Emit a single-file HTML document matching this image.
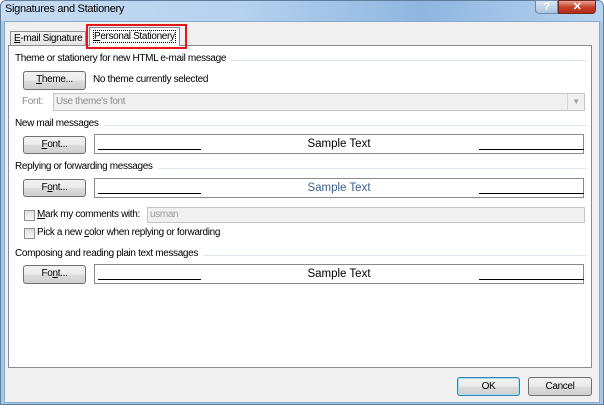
<!DOCTYPE html>
<html><head><style>
*{margin:0;padding:0;box-sizing:border-box}
body{width:604px;height:409px;overflow:hidden;background:#fff;font-family:"Liberation Sans",sans-serif;font-size:10px;letter-spacing:-0.35px;color:#000;position:relative;white-space:nowrap}
.a{position:absolute}
.btn{position:absolute;border:1px solid #707070;border-radius:3px;background:linear-gradient(#f2f2f2 0%,#ebebeb 50%,#dddddd 51%,#cfcfcf 100%);text-align:center;font-size:10px;line-height:16px}
.grp{position:absolute;left:15px;font-size:10px;background:#fff;padding-right:5px;z-index:2}
.sep{position:absolute;left:15px;width:572px;height:1px;background:#dde6ee}
.box{position:absolute;left:94px;width:490px;height:20px;border:1px solid #8a8a8a;background:#fff;text-align:center;font-size:11.5px;letter-spacing:0;line-height:18px}
.ln{position:absolute;top:14px;height:1px;background:#000}
.cb{position:absolute;width:11px;height:11px;border:1px solid #8e8f8f;background:linear-gradient(#e0e0e0,#f8f8f8)}
</style></head><body>
<div class="a" style="left:0;top:0;width:604px;height:405px;background:#a9c8e8;border:1px solid #5f7d9c;border-radius:6px 6px 0 0"></div>
<div class="a" style="left:1px;top:1px;width:602px;height:20px;background:linear-gradient(90deg,#c7dcf2,#b5d1ee 40%,#8fb6e0 70%,#b8d3ef);border-radius:5px 5px 0 0"></div>
<div class="a" style="left:5px;top:3px;font-size:11px;letter-spacing:-0.3px;color:#000">Signatures and Stationery</div>
<div class="a" style="left:535px;top:0;width:23px;height:14px;background:linear-gradient(#d8e6f4,#a8c4e0);border:1px solid #6d8bab;border-radius:0 0 0 4px;color:#fff;font-size:11px;font-weight:bold;text-align:center;line-height:12px">?</div>
<div class="a" style="left:558px;top:0;width:38px;height:14px;background:linear-gradient(#e8a393,#c7412b 50%,#b32a15);border:1px solid #6e2a20;border-radius:0 0 4px 0;color:#fff;font-size:11px;font-weight:bold;text-align:center;line-height:12px">✕</div>
<div class="a" style="left:4px;top:21px;width:596px;height:382px;background:#f0f0f0;border:1px solid #8ba9c8"></div>
<!-- tabs -->
<div class="a" style="left:10px;top:31px;width:76px;height:15px;border:1px solid #8e8f8f;border-bottom:none;background:linear-gradient(#f3f3f3,#e3e3e3);line-height:13px;padding-left:3px"><u>E</u>-mail Signature</div>
<div class="a" style="left:8px;top:45px;width:584px;height:323px;background:#fff;border:1px solid #898c95"></div>
<div class="a" style="left:89px;top:27px;width:91px;height:19px;border:1px solid #898c95;border-bottom:none;background:#fff;line-height:18px;padding-left:4px;z-index:3"><span style="outline:1px dotted #000"><u>P</u>ersonal Stationery</span></div>
<div class="a" style="left:86px;top:24px;width:101px;height:25px;border:2px solid #e3161b;z-index:4"></div>
<!-- section 1 -->
<div class="sep" style="top:60px"></div>
<div class="grp" style="top:53px">Theme or stationery for new HTML e-mail message</div>
<div class="btn" style="left:23px;top:71px;width:63px;height:19px"><u>T</u>heme...</div>
<div class="a" style="left:93px;top:74px">No theme currently selected</div>
<div class="a" style="left:22px;top:96px;color:#8d8d8d">Font:</div>
<div class="a" style="left:53px;top:93px;width:532px;height:18px;border:1px solid #c5c5c5;background:#f0f0f0;color:#8d8d8d;padding-left:2px;line-height:16px">Use theme's font</div>
<div class="a" style="left:567px;top:94px;width:17px;height:16px;border-left:1px solid #d8d8d8;color:#a0a0a0;font-size:8px;text-align:center;line-height:16px">▼</div>
<!-- new mail -->
<div class="sep" style="top:125px"></div>
<div class="grp" style="top:118px">New mail messages</div>
<div class="btn" style="left:23px;top:136px;width:63px;height:18px"><u>F</u>ont...</div>
<div class="box" style="top:134px">Sample Text<div class="ln" style="left:3px;width:103px"></div><div class="ln" style="left:384px;width:105px"></div></div>
<!-- replying -->
<div class="sep" style="top:168px"></div>
<div class="grp" style="top:161px">Replying or forwarding messages</div>
<div class="btn" style="left:23px;top:179px;width:63px;height:18px">F<u>o</u>nt...</div>
<div class="box" style="top:178px;color:#3c5d8f">Sample Text<div class="ln" style="left:3px;width:103px"></div><div class="ln" style="left:384px;width:105px"></div></div>
<div class="cb" style="left:24px;top:210px"></div>
<div class="a" style="left:37px;top:209px"><u>M</u>ark my comments with:</div>
<div class="a" style="left:147px;top:207px;width:438px;height:16px;border:1px solid #c5c5c5;background:#f0f0f0;color:#9a9a9a;padding-left:2px;line-height:14px">usman</div>
<div class="cb" style="left:24px;top:228px"></div>
<div class="a" style="left:37px;top:227px">Pick a new <u>c</u>olor when replying or forwarding</div>
<!-- composing -->
<div class="sep" style="top:255px"></div>
<div class="grp" style="top:248px">Composing and reading plain text messages</div>
<div class="btn" style="left:23px;top:265px;width:63px;height:19px">Fo<u>n</u>t...</div>
<div class="box" style="top:264px">Sample Text<div class="ln" style="left:3px;width:103px"></div><div class="ln" style="left:384px;width:105px"></div></div>
<!-- bottom buttons -->
<div class="btn" style="left:457px;top:377px;width:63px;height:19px;border-color:#3c7fb1;box-shadow:inset 0 0 0 1px #9fe0f7;line-height:17px">OK</div>
<div class="btn" style="left:528px;top:377px;width:64px;height:19px;line-height:17px">Cancel</div>
</body></html>
